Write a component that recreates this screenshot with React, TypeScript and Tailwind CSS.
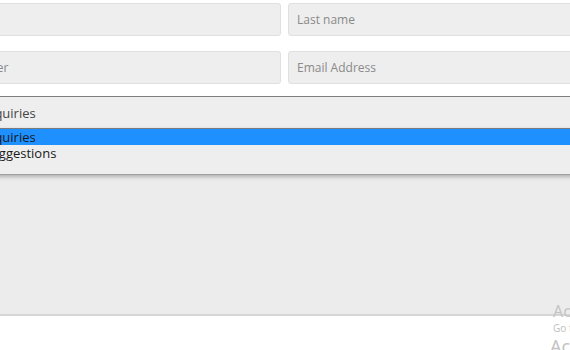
import React from "react";

export default function App() {
  const font = { fontFamily: '"Open Sans", "Noto Sans", sans-serif' };
  return (
    <div className="relative w-[570px] h-[350px] overflow-hidden bg-white" style={font}>
      <div className="ml-[-80px] w-[729px] pt-[3px]">
        <div className="flex gap-[7px]">
          <div className="w-[361px] h-[33px] bg-[#eeeeee] border border-[#e0e0e0] rounded-[3px] flex items-center pl-[8px] pt-[1px] text-[12px] text-[#8a8a8a]">
            First name
          </div>
          <div className="w-[361px] h-[33px] bg-[#eeeeee] border border-[#e0e0e0] rounded-[3px] flex items-center pl-[8px] pt-[1px] text-[12px] text-[#8a8a8a]">
            Last name
          </div>
        </div>
        <div className="flex gap-[7px] mt-[15px]">
          <div className="w-[361px] h-[33px] bg-[#eeeeee] border border-[#e0e0e0] rounded-[3px] flex items-center pl-[2px] pt-[1px] text-[12px] text-[#8a8a8a]">
            Phone Number
          </div>
          <div className="w-[361px] h-[33px] bg-[#eeeeee] border border-[#e0e0e0] rounded-[3px] flex items-center pl-[8px] pt-[1px] text-[12px] text-[#8a8a8a]">
            Email Address
          </div>
        </div>
        <div className="relative mt-[12px]">
          <div className="h-[32px] bg-[#eeeeee] border-t border-[#7f7f7f] flex items-center pl-[8px] pt-[2px] text-[13px] text-[#444444]">
            General Enquiries
          </div>
          <div className="h-[188px] bg-[#ececec] border-b-2 border-[#d6d6d6]"></div>
          <div className="absolute left-0 right-0 top-[32px] h-[47px] bg-[#eeeeee] border-t border-[#7a7a7a] border-b border-b-[#a0a0a0] shadow-[0_2px_4px_rgba(0,0,0,0.25)] text-[13px] text-[#1a1a1a]">
            <div className="h-[16px] bg-[#1e90ff] flex items-center pl-[8px] pt-[1px]">General Enquiries</div>
            <div className="h-[16px] flex items-center pt-[1px]">
              <span className="ml-[-10px]">Feedback &amp; Suggestions</span>
            </div>
          </div>
        </div>
      </div>
      <div className="absolute left-[553px] top-[303px] text-[#c4c4c4] leading-none whitespace-nowrap" style={{ fontFamily: '"Noto Sans", "Open Sans", sans-serif' }}>
        <div className="text-[16px]">Activate Windows</div>
        <div className="text-[10px] mt-[4px]">Go to Settings to activate Windows.</div>
      </div>
      <div className="absolute left-[550px] top-[337px] text-[18px] leading-none text-[#c4c4c4] whitespace-nowrap" style={{ fontFamily: '"Noto Sans", "Open Sans", sans-serif' }}>
        Activate Windows
      </div>
    </div>
  );
}
